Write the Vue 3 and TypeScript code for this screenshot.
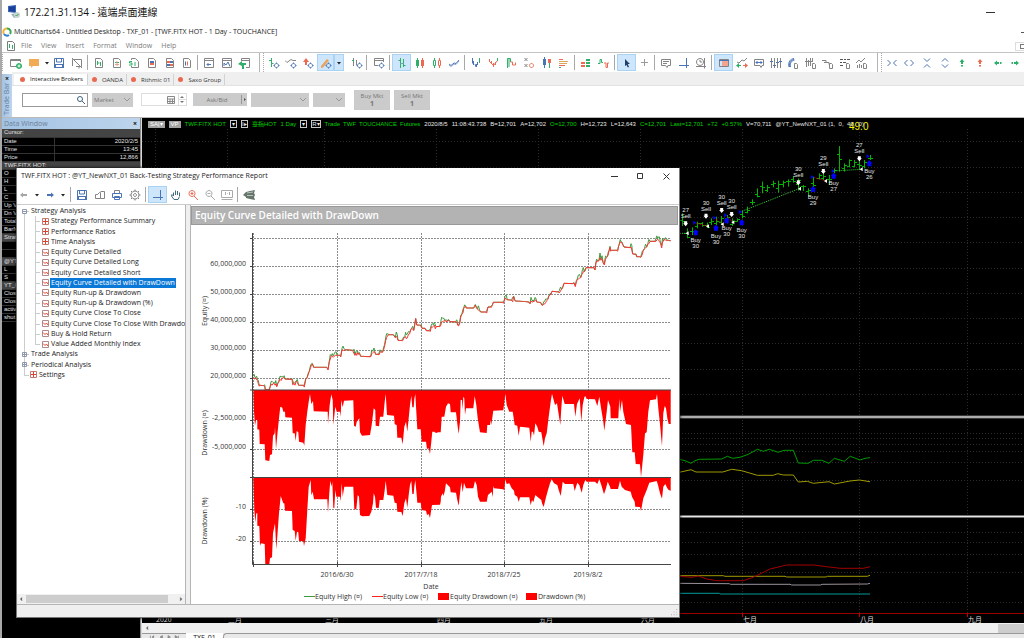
<script setup lang="ts">
import { ref } from 'vue'

type Shape = [color: string, kind: 's' | 'f', d: string]
type Pt = [number, number]

const G = '#848484'
const B = '#4a74b4'
const N = '#2fb06a'
const R = '#ec6a52'
const K = '#555555'

const sheet = 'M2.5 1.5h5l2 2v7h-7z'
const corner = 'M7.5 6.5h2l1 1v4h-3z'
const gear = 'M8.500 6.500a2 2 0 1 0 .01 0z'
const gearTeeth = 'M8.500 5.500v1M8.500 10.500v1M5.500 8.500h1M10.500 8.500h1'
const icons: Record<string, Shape[]> = {
  newWin: [[G, 's', 'M10.500 5V2.500h-10v7H6'], [G, 's', 'M.5 3.500h10'], [N, 'f', 'M9 6a3 3 0 1 0 .01 0z'], ['#fff', 's', 'M9 7.500v3M7.500 9h3']],
  folder: [['#f2ab55', 'f', 'M1 2h10v7H5l-2 2V9H1z']],
  save: [[B, 's', 'M1.500 1.500h9v9h-9zM3.500 1.500v3.500h5v-3.500'], [B, 'f', 'M1 7h10v4H1z'], ['#fff', 'f', 'M3 8h6v2H3z']],
  unlink: [[G, 's', 'M1.500 9V2.500h9v7H5M1 1l10 10M8 9v2.500']],
  sheetA: [[G, 's', sheet], [N, 's', 'M4.500 4v4M4.500 6h2M7.500 5v4']],
  sheetB: [[G, 's', sheet], [N, 's', 'M4 5.500h4'], ['#e7a08a', 's', 'M4 7.500h4M6 4v5']],
  sheetC: [[G, 's', 'M3.500 3v-1.500h4l3 3v6h-7V9'], [N, 's', 'M4 4.500H1.500V6H4v2H1M7 5v4']],
  sheetD: [[G, 's', sheet], [B, 'f', 'M4 4h4v2H4z'], [R, 'f', 'M4 6h4v2H4z']],
  sheetE: [[G, 's', sheet], [R, 'f', 'M3 4h3v2H3zM6 7h3v2H6z'], [B, 'f', 'M6 4h3v2H6zM3 7h3v2H3z']],
  sheetF: [[G, 's', sheet], [B, 's', 'M4.500 4.500v4'], [R, 's', 'M6.500 4.500v4']],
  winIn: [[G, 's', 'M1.500 1.500h9v9h-9zM1 3.500h10'], [B, 's', 'M8 7.500H4M5.500 6L4 7.500 5.500 9']],
  winChart: [[G, 's', 'M1.500 1.500h9v9h-9zM1 3.500h10'], [B, 's', 'M3 9V6l2 2 2-3 2 4.500']],
  winOut: [[G, 's', 'M3.500 4V1.500h8v9H8M3 3.500h8'], [N, 'f', 'M0 7l4-3v2h4v2H6v4H4V9z']],
  gearA: [[N, 's', 'M3.500 1v9M3.500 3.500H1M3.500 6.500h2'], [B, 's', gear], [B, 's', gearTeeth]],
  gearB: [[G, 's', 'M0 3.500l2 2 4-3 2 1h3'], [B, 's', gear], [B, 's', gearTeeth]],
  gearC: [[R, 'f', 'M1 5l3-4 3 4H5v3H3V5z'], [B, 's', gear], [B, 's', gearTeeth]],
  pencil: [['#e9a35a', 'f', 'M1 9l6-7 2 1.500-6 7-2 .5z'], [B, 's', gear], [B, 's', gearTeeth]],
  gearD: [[G, 's', 'M2.500 1v8M5.500 3v5'], [N, 's', 'M1 3.500h2'], [B, 's', gear], [B, 's', gearTeeth]],
  gearE: [[G, 's', 'M10.500 5V1.500h-9v7H5M1 3.500h10'], [B, 's', gear], [B, 's', gearTeeth]],
  ohlc: [[N, 's', 'M4.500 1v10M2.500 3.500h2M7.500 2v8M7.500 8.500h2'], ['#7aa7b8', 's', 'M4.500 6.500h3']],
  candles: [[N, 'f', 'M2 3h3v6H2z'], [N, 's', 'M3.500 1v10'], [R, 'f', 'M7 3h3v6H7z'], [R, 's', 'M8.500 1v10']],
  hollow: [[N, 's', 'M2.500 3.500h2v5h-2zM3.500 1v2M3.500 9v2'], [R, 's', 'M7.500 3.500h2v5h-2zM8.500 1v2M8.500 9v2']],
  line: [[B, 's', 'M1 7l2 1.500L6 6l2 .5L11 3'], ['#8aa7d4', 's', 'M1 8l2 1.500L6 7l2 .5L11 4']],
  vA: [[B, 's', 'M2.500 1v5.500M3.500 4v4M5 7l1 3'], [B, 's', 'M6.500 10V7M7.500 8V5'], [N, 's', 'M9.500 1v5']],
  vB: [[R, 's', 'M1.500 2v3M3.500 4v3M5.500 6v4M7.500 5v3'], [R, 's', 'M1.500 4.500l4 4 4-5'], [N, 's', 'M9.500 1v3']],
  step: [[N, 's', 'M2.500 11V1.500h3V5M4 2v8'], [R, 's', 'M5.500 5h2v3h3V5.500']],
  xo: [[G, 's', 'M1.500 1l3 3M4.500 1l-3 3M1.500 7l3 3M4.500 7l-3 3'], [R, 's', 'M8.500 6.500a2 2 0 1 0 .01 0z']],
  cand2: [[B, 'f', 'M2 2h3v6H2z'], [B, 's', 'M3.500 0v11'], [R, 'f', 'M7 2h3v4H7z'], [N, 's', 'M8.500 6v5']],
  rows: [[R, 's', 'M1 2.500h4M1 8.500h6'], ['#d9a55a', 's', 'M1 4.500h9M1 6.500h8'], [N, 's', 'M1 10.500h2']],
  blocks: [[R, 'f', 'M1 5h4v2H1zM1 8h4v2H1z'], [N, 'f', 'M6 2h4v2H6zM6 5h4v2H6zM6 8h4v2H6z']],
  pulse: [[N, 's', 'M0 6.500h2V2.500h1.500v3H5'], [R, 's', 'M6 6h2v4.500h1.500V6H11']],
  cursor: [['#1f4068', 'f', 'M4 2l5 5H6.800l1.200 3-1.200.5L5.600 8 4 9z']],
  plus: [['#9a9a9a', 's', 'M5.500 2v7M2 5.500h7']],
  note: [[G, 's', 'M1.500 2.500h9v6H8l-1 2-1.500-2h-4zM3 4.500h6M3 6.500h4']],
  ell: [[B, 's', 'M8.500 1v10M1 8.500h10']],
  clock: [[G, 's', 'M5 1.500a3.500 3.500 0 1 0 .01 0zM5 3v2h2M9.500 1v10.500M1 9.500h10']],
  panel: [[G, 's', 'M1.500 2.500h9v7h-9z'], [B, 's', 'M1 3.500h10'], ['#f3a48f', 'f', 'M4 4h6v5H4z']],
  trend: [[G, 's', 'M1 5l2 1 3-3 2 1 3-3'], [N, 'f', 'M0 8.500l3-2.500v5z'], [N, 'f', 'M2 8h3v1H2z'], [R, 'f', 'M12 8.500L9 6v5z'], [R, 'f', 'M7 8h3v1H7z']],
  chat: [[G, 's', 'M1.500 2.500h9v6H9l-1 2-1-2H1.500z'], [B, 's', 'M4.500 4L3 5.500 4.500 7M7.500 4L9 5.500 7.500 7M3 5.500h6']],
  bars: [[G, 's', 'M1.500 1v10M4.500 1v10M7.500 1v10M10.500 1v10'], [B, 's', 'M0 4.500h3M3 8.500h3M6 5.500h3M9 4.500h3']],
  arcDoc: [[B, 's', 'M2 10C1 5 3 2 7 1.500M3.500 10C3 6 4 4 7.500 3M2.500 10C2 5.500 4 3 7 2.500'], [G, 's', corner]],
  barsDoc: [[G, 's', 'M1.500 1v9M3.500 3v6M5.500 1v8M7.500 1v4M0 4.500h7'], [G, 's', corner]],
  flowDoc: [[G, 's', 'M0 3.500h4v2h3M2 5.500h5v2'], [G, 's', corner]],
  gridDoc: [[K, 's', 'M1 2.500h3M5 2.500h2M8 2.500h3M1 5.500h2M4 5.500h3M1 8.500h3'], [G, 's', corner]],
  chartDoc: [[G, 's', 'M0 6l3-3 2 2 4-4M1.500 8v3M3.500 7v4M5.500 8v3'], [G, 's', corner]],
  inH: [[B, 's', 'M1.500 3L4.500 6 1.500 9M10.500 3L7.500 6l3 3']],
  outH: [[B, 's', 'M4.500 3L1.500 6l3 3M7.500 3l3 3-3 3']],
  inV: [[B, 's', 'M3 1.500L6 4.500l3-3M3 10.500l3-3 3 3']],
  outV: [[B, 's', 'M3 4.500l3-3 3 3M3 7.500l3 3 3-3']],
  upG: [[N, 'f', 'M6 2l2.500 3H7v2H5V5H3.500zM5 8h2v1.500H5z']],
  upR: [[R, 'f', 'M6 2l2.500 3H7v2H5V5H3.500zM5 8h2v1.500H5z']],
  leftG: [[N, 'f', 'M2 6l3-2.500V5h2v2H5v1.500zM8 5h1.500v2H8z']],
  rightG: [[N, 'f', 'M10 6L7 3.500V5H5v2h2v1.500zM2.500 5H4v2H2.500z']],
  caret: [['#222', 'f', 'M4 5h4L6 7.500z']],
  back: [['#a5a5a5', 'f', 'M2 6l3-2.500V5h4v2H5v1.500z']],
  forward: [[B, 'f', 'M10 6L7 3.500V5H3v2h4v1.500z']],
  copy: [[G, 's', 'M1.500 9.500v-4h2l2-2h1v6zM6.500 2.500h4v7h-4']],
  print: [[G, 's', 'M3.500 4V1.500h5V4'], [B, 's', 'M1.500 4.500h9v4h-9zM3.500 7.500h5v3h-5z']],
  gear: [[G, 's', 'M6 2a4 4 0 1 0 .01 0zM6 4.500a1.500 1.500 0 1 0 .01 0zM6 .5v1.500M6 10v1.500M.5 6h1.500M10 6h1.500M2 2l1 1M9 9l1 1M10 2L9 3M3 9l-1 1']],
  hand: [['#406a80', 's', 'M3.500 7V3.500M5.500 6V1.500M7.500 6V2M9.500 7V3.500M3.500 7L2 5.500 1.500 7l2.500 3.500h4l1.500-3']],
  zoomIn: [[R, 's', 'M5 1.500a3 3 0 1 0 .01 0zM7 7l4 4M5 3v3M3.500 4.500h3']],
  zoomOut: [['#aaaaaa', 's', 'M5 1.500a3 3 0 1 0 .01 0zM7 7l4 4M3.500 4.500h3']],
  oneOne: [['#aaaaaa', 's', 'M.5 1.500h11v7H.5zM4.500 3v3M6 4.500h.5M8.500 3v3M.5 10.500h11']],
  globe: [['#66756c', 'f', 'M0 6l3-3 4-1 5-1-1 3 1 2-1 2 1 3-5-1-4-1 0-1z'], ['#b9c4bd', 's', 'M4 4l6-1M4 6.500h6']],
}

interface Group { w: number; items?: string[]; kind?: 'sep' | 'grip' | 'pad'; on?: string }
const sep: Group = { w: 4, kind: 'sep' }
const pad: Group = { w: 4, kind: 'pad' }
const grip: Group = { w: 12, kind: 'grip' }
const toolbar: Group[] = [
  { w: 36, items: ['newWin', 'folder'] }, { w: 7, items: ['caret'] }, { w: 36, items: ['save', 'unlink'] }, sep,
  { w: 106, items: ['sheetA', 'sheetB', 'sheetC', 'sheetD', 'sheetE', 'sheetF'] }, sep,
  { w: 53, items: ['winIn', 'winChart', 'winOut'] }, grip,
  { w: 52, items: ['gearA', 'gearB', 'gearC'] }, { w: 17, items: ['pencil'], on: 'pencil' }, { w: 10, items: ['caret'], on: 'caret' }, pad,
  { w: 17, items: ['gearD'] }, sep, { w: 19, items: ['gearE'] }, sep,
  { w: 71, items: ['ohlc', 'candles', 'hollow', 'line'], on: 'ohlc' }, sep,
  { w: 106, items: ['vA', 'vB', 'step', 'xo', 'cand2', 'rows'] }, sep,
  { w: 36, items: ['blocks', 'pulse'] }, sep, { w: 36, items: ['cursor', 'plus'], on: 'cursor' }, sep,
  { w: 53, items: ['note', 'ell', 'clock'] }, sep,
  { w: 157, items: ['panel', 'trend', 'chat', 'bars', 'arcDoc', 'barsDoc', 'flowDoc', 'gridDoc', 'chartDoc'], on: 'panel' }, grip,
  { w: 141, items: ['inH', 'outH', 'inV', 'outV', 'upG', 'upR', 'leftG', 'rightG'] },
]
const reportTools: Group[] = [
  { w: 51, items: ['back', 'caret', 'forward', 'caret'] }, sep,
  { w: 71, items: ['save', 'copy', 'print', 'gear'] }, sep,
  { w: 88, items: ['ell', 'hand', 'zoomIn', 'zoomOut', 'oneOne'], on: 'ell' }, sep,
  { w: 18, items: ['globe'] },
]

const menus = ['File', 'View', 'Insert', 'Format', 'Window', 'Help']
const brokers = ['Interactive Brokers', 'OANDA', 'Rithmic 01', 'Saxo Group']
const broker = ref(brokers[0])

const dataRows: { name: string; value?: string; head?: boolean }[] = [
  { name: 'Cursor:', head: true }, { name: 'Date', value: '2020/2/5' }, { name: 'Time', value: '13:45' },
  { name: 'Price', value: '12,866' }, { name: 'TWF.FITX HOT:', head: true }, { name: 'O' }, { name: 'H' }, { name: 'L' }, { name: 'C' },
  { name: 'Up Vol' }, { name: 'Dn Vol' }, { name: 'Total Vol' }, { name: 'BarN' }, { name: 'Strategy', head: true }, { name: '' }, { name: '' },
  { name: '@YT_NewNXT', head: true }, { name: 'L' }, { name: 'S' }, { name: 'YT_01', head: true }, { name: 'Close' }, { name: 'Close' },
  { name: 'active' }, { name: 'shut' },
]

interface Node { label: string; level: number; icon: 'minus' | 'plus' | 'table' | 'curve'; end?: boolean }
const tree: Node[] = [
  { label: 'Strategy Analysis', level: 0, icon: 'minus' },
  ...['Strategy Performance Summary', 'Performance Ratios', 'Time Analysis'].map((label): Node => ({ label, level: 1, icon: 'table' })),
  ...['Equity Curve Detailed', 'Equity Curve Detailed Long', 'Equity Curve Detailed Short', 'Equity Curve Detailed with DrawDown',
    'Equity Run-up & Drawdown', 'Equity Run-up & Drawdown (%)', 'Equity Curve Close To Close', 'Equity Curve Close To Close With Drawdown',
    'Buy & Hold Return'].map((label): Node => ({ label, level: 1, icon: 'curve' })),
  { label: 'Value Added Monthly Index', level: 1, icon: 'curve', end: true },
  { label: 'Trade Analysis', level: 0, icon: 'plus' },
  { label: 'Periodical Analysis', level: 0, icon: 'plus' },
  { label: 'Settings', level: 0, icon: 'table', end: true },
]
const selected = ref('Equity Curve Detailed with DrawDown')

/* Series are stored in thirds of a pixel, relative to an origin. */
function parse(text: string, dx = 0): Pt[] {
  return text.trim().split(/\s+/).map((p) => {
    const [x, y] = p.split(',').map(Number)
    return [x + dx, y]
  })
}
function place(pts: Pt[], ox: number, oy: number): string {
  return pts.map(([x, y]) => `${(ox + x / 3).toFixed(1)},${(oy + y / 3).toFixed(1)}`).join(' ')
}
const noise = (i: number) => { const v = Math.sin(i * 12.9898) * 43758.5453; return v - Math.floor(v) }

const equity: Pt[] = [
  ...parse(`190,455 195,458 200,462 205,472 210,481 224,482 226,494 238,494 243,480 250,470 255,474 260,482 263,470 270,462 280,456 285,462
    306,463 308,475 315,474 322,468 326,481 343,481 347,464 352,452 358,440 362,425 367,418 371,427 413,427 414,435 418,408 427,388 432,396
    436,388 441,391 452,391 456,376 462,376 466,374 490,376 492,384 500,388 508,378 512,394 540,395 545,382 552,374 557,388 567,388 573,380
    578,383 584,362 590,332 594,325 598,329 613,329 616,336 622,337 624,346 638,347 644,336 652,334 659,320 665,310 671,310 677,280 680,300
    694,301 696,310 708,310 711,317 721,317 724,306 733,301 736,305`),
  ...parse(`18,305 30,304 35,292 48,285 60,290 78,291 86,300 92,276 99,260 104,244 109,249 130,249 136,239 142,250 152,261 170,261 174,246
    184,246 190,232 220,232 225,220 232,224 248,226 251,216 256,228 290,230 300,232 315,224 320,231 335,233 341,238 350,225 360,210 366,199
    388,201 395,188 402,175 432,176 436,180 445,160 452,152 460,143 468,128 495,128 500,110 510,98 516,103 523,114 530,97 535,86 540,68 545,76
    563,76 568,52 576,54 582,66 603,68 608,87 618,88 620,95 632,95 640,76 650,60 660,49 678,49 683,38 688,50 695,62 700,44 706,40 712,46 722,47`, 720),
]
const low: Pt[] = []
const high: Pt[] = []
equity.forEach((p, i) => {
  const q = equity[i + 1] ?? p
  const steps = Math.max(1, Math.round((q[0] - p[0]) / 3))
  const flat = q[0] - p[0] > 9 && Math.abs(q[1] - p[1]) < 3
  for (let k = 0; k < steps; k++) {
    const x = p[0] + ((q[0] - p[0]) * k) / steps
    const y = p[1] + ((q[1] - p[1]) * k) / steps + (flat ? 0 : noise(x) * 10 - 3)
    low.push([x, Math.min(494, y)])
    high.push([x, Math.min(494, y - (flat ? 0 : noise(x + 7) ** 2 * 14))])
  }
})
const lowLine = place(low, 190, 225)
const highLine = place(high, 190, 225)

const ddMoney = place([
  ...parse(`190,495 192,560 195,602 198,585 202,585 202,613 208,614 209,657 224,658 226,706 238,708 240,690 246,688 249,632 254,625 255,605 258,672
    261,640 267,580 271,545 277,548 280,560 285,560 286,577 306,578 308,625 314,625 317,648 320,618 325,622 327,650 340,653 343,662 347,600 352,560
    356,530 360,507 364,537 369,528 371,559 413,560 414,598 419,540 424,508 428,525 430,600 436,545 440,560 450,560 452,575 454,525 458,547 462,527
    490,526 492,602 497,605 500,590 508,580 510,622 516,632 540,630 545,600 551,550 556,555 557,602 567,604 570,575 580,575 584,530 587,507 591,570
    612,572 614,598 620,600 622,638 634,638 638,658 643,605 648,590 652,620 656,580 660,540 664,512 667,547 671,547 673,522 676,507 680,580 682,613
    692,613 695,650 708,650 711,672 716,670 720,687 724,650 727,620 733,620 738,624 745,622`),
  ...parse(`28,622 32,622 35,575 43,575 48,545 54,535 60,537 62,562 78,562 82,596 86,627 90,590 92,525 96,525 98,555 100,515 103,520 105,570 108,550
    130,550 134,513 139,540 143,580 150,622 170,624 172,600 180,600 182,585 184,600 190,557 220,556 222,540 226,506 230,540 238,560 248,560 254,600
    262,602 266,632 270,605 298,608 302,650 305,620 309,620 312,632 316,595 322,605 326,620 334,622 337,640 341,664 345,640 350,625 356,575 362,530
    366,506 375,540 381,535 384,555 391,600 394,550 397,512 404,537 432,537 436,575 441,537 449,520 454,590 458,540 463,517 466,513 470,522 495,523
    502,543 508,515 513,548 520,590 523,617 530,560 534,525 541,545 542,580 565,580 568,520 570,560 576,525 580,560 588,597 603,600 607,682 614,682
    617,717 630,718 633,757 640,690 645,625 650,622 655,560 660,526 678,523 681,507 685,550 690,598 696,664 700,565 704,543 708,550 712,580 716,597
    722,597 722,495`, 720),
], 190, 225)
const ddPercent = place([
  ...parse(`190,52 193,150 196,187 199,160 202,160 202,197 208,198 210,257 213,250 224,252 226,313 238,313 240,295 246,292 249,220 255,190 259,268
    262,230 267,160 272,108 280,130 283,130 285,152 306,153 308,210 314,213 317,242 321,215 325,217 327,243 340,244 342,258 347,235 352,150 356,80
    362,60 364,106 368,95 372,118 412,118 414,158 418,100 421,62 425,80 427,65 430,143 433,145 436,90 439,110 450,110 452,124 455,70 458,110 463,80
    490,80 493,148 499,148 503,105 507,110 510,165 517,169 538,168 544,155 549,130 551,100 555,110 558,143 566,144 569,120 580,120 584,90 587,62
    592,105 610,107 614,128 620,130 622,155 634,156 638,168 643,130 648,115 652,143 656,105 660,75 664,62 667,102 671,102 673,80 676,60 680,105
    682,128 692,128 695,150 708,152 711,165 716,162 720,174 726,135 750,134 752,125`),
  ...parse(`3,110 8,100 10,108 14,95 18,70 30,82 32,97 48,98 52,120 56,137 60,100 64,66 68,97 72,68 78,85 100,85 105,63 110,75 114,110 120,125
    140,125 144,105 155,95 158,112 160,78 162,85 190,88 193,92 196,58 200,72 208,70 215,85 222,92 224,105 232,110 236,126 240,112 268,112 272,136
    276,120 280,127 286,105 292,110 304,120 306,130 311,141 318,112 324,90 330,70 335,58 342,70 352,75 356,90 362,108 368,65 375,72 400,72 404,93
    412,68 418,75 425,98 430,75 436,60 440,65 465,65 472,72 478,58 484,75 492,103 498,85 503,65 510,80 512,87 534,87 540,62 545,80 555,90 572,95
    576,110 584,125 586,140 600,141 603,153 610,115 620,90 628,68 650,63 654,75 660,100 666,116 670,80 676,72 682,85 686,90 692,92 692,52`, 750),
], 190, 460)

const yTicks = [
  { y: 239, label: '' }, { y: 267, label: '60,000,000' }, { y: 295, label: '50,000,000' }, { y: 323, label: '40,000,000' },
  { y: 351, label: '30,000,000' }, { y: 379, label: '20,000,000' }, { y: 421, label: '-2,500,000' }, { y: 450, label: '-5,000,000' },
  { y: 510, label: '-10' }, { y: 542, label: '-20' },
]
const xTicks = [
  { x: 253, label: '' }, { x: 337, label: '2016/6/30' }, { x: 421, label: '2017/7/18' }, { x: 504, label: '2018/7/25' }, { x: 588, label: '2019/8/2' },
]
const legend = [
  { x: 304, t: 315, box: false, c: '#3f9a3f', label: 'Equity High (¤)' }, { x: 372, t: 383, box: false, c: '#ff2222', label: 'Equity Low (¤)' },
  { x: 438, t: 450, box: true, c: '#ff0000', label: 'Equity Drawdown (¤)' }, { x: 526, t: 538, box: true, c: '#ff0000', label: 'Drawdown (%)' },
]

/* Price chart */
const months = [
  { x: 155, label: '2020' }, { x: 227, label: '二月' }, { x: 324, label: '三月' }, { x: 436, label: '四月' }, { x: 538, label: '五月' },
  { x: 640, label: '六月' }, { x: 742, label: '七月' }, { x: 859, label: '八月' }, { x: 967, label: '九月' },
]
const rules = [141, 167, 192, 217, 242, 268, 293, 318, 343, 369, 394, 433, 438, 444, 451, 462, 480, 532, 542, 554, 572, 602]
const at = (x: number, y: number): Pt => [500 + x / 3, 110 + y / 3]
const bars = ([[545, 310, 348], [561, 355, 385], [575, 352, 375], [590, 335, 355], [605, 336, 350], [620, 338, 354], [633, 325, 345],
  [648, 320, 345], [664, 318, 345], [680, 315, 340], [697, 325, 348], [711, 325, 335], [727, 303, 325], [742, 290, 310], [757, 268, 285],
  [772, 235, 262], [787, 215, 250], [802, 225, 246], [818, 212, 232], [833, 212, 248], [850, 212, 232], [865, 208, 230], [880, 198, 218],
  [895, 205, 242], [910, 225, 243], [925, 235, 260], [940, 200, 245], [956, 190, 208], [970, 190, 210], [988, 195, 225], [1003, 175, 190],
  [1018, 108, 185], [1033, 160, 185], [1048, 148, 172], [1063, 150, 172], [1078, 145, 180], [1093, 150, 175], [1110, 135, 150]] as number[][])
  .map(([x, a, b], i) => {
    const [px, top] = at(x, a)
    const bottom = at(x, b)[1]
    const h = bottom - top
    const o = Math.round(top + h * (0.2 + 0.6 * noise(i + 3))) + 0.5
    const c = Math.round(top + h * (0.1 + 0.8 * noise(i + 40))) + 0.5
    const r = Math.round(px) + 0.5
    return `M${r} ${top}V${bottom}M${r - 2.5} ${o}H${r}M${r} ${c}H${r + 2.5}`
  }).join('')
interface Mark { x: number; y: number; side: 'Sell' | 'Buy'; n: string; ty: number }
const marks: Mark[] = ([[557, 340, 'Sell', '27', 300], [618, 317, 'Sell', '30', 278], [665, 300, 'Sell', '30', 261], [695, 312, 'Sell', '30', 273],
  [895, 217, 'Sell', '30', 178], [970, 183, 'Sell', '29', 143], [1078, 145, 'Sell', '27', 106], [587, 367, 'Buy', '30', 391], [648, 353, 'Buy', '30', 378],
  [680, 331, 'Buy', '30', 355], [725, 337, 'Buy', '30', 360], [939, 237, 'Buy', '29', 261], [1001, 197, 'Buy', '27', 218],
  [1108, 160, 'Buy', '26', 183]] as [number, number, 'Sell' | 'Buy', string, number][])
  .map(([x, y, side, n, ty]) => ({ x: at(x, y)[0], y: at(x, y)[1], side, n, ty: at(0, ty)[1] }))
const entries = ([[583, 338], [643, 323], [676, 316], [720, 306], [936, 201], [998, 183], [1103, 139]] as Pt[]).map(([x, y]) => at(x, y))
const exits = ([[563, 370], [624, 349], [668, 343], [700, 337], [900, 236], [978, 213], [1085, 178]] as Pt[]).map(([x, y]) => at(x, y))
const links = ([[540, 370, 563, 370, 0], [720, 306, 897, 236, 0], [998, 183, 1085, 178, 0], [583, 338, 624, 349, 1], [643, 323, 668, 343, 1],
  [676, 316, 700, 337, 1], [936, 201, 978, 213, 1]] as number[][]).map(([a, b, c, d, loss]) => ({ p: at(a, b), q: at(c, d), c: loss ? '#dd0000' : '#3ad23a' }))

const indicators = [
  { c: '#009a00', p: '28,178 45,182 63,190 75,182 88,178 155,177 172,169 188,175 210,172 235,163 262,148 280,154 298,148 325,157 342,151 370,151 385,189 415,190 430,181 455,181 477,190 493,175 523,184 541,169 570,180 585,175 600,173' },
  { c: '#a09a00', p: '28,217 63,209 78,216 158,216 185,208 215,212 262,226 310,226 323,221 340,225 370,225 385,246 412,244 430,250 477,245 493,252 540,243 568,240 600,245' },
  { c: '#a09a00', p: '28,527 160,527 165,529 345,529 350,531 468,531 472,529 592,529 600,526' },
  { c: '#a00000', p: '28,529 65,532 85,528 110,537 140,542 220,542 250,532 300,507 350,495 430,495 470,500 510,505 580,505 600,500' },
  { c: '#9a949a', p: '28,550 178,551 182,553 360,553 365,555 452,555 456,553 592,552 600,550' },
  { c: '#009a9a', p: '28,580 148,580 150,582 600,582' },
].map((s) => ({ c: s.c, p: place(parse(s.p), 670, 400) }))

const market = ['Trade', 'TWF', 'TOUCHANCE', 'Futures']
const quotes: { t: string; c?: string }[] = [
  { t: '2020/8/5', c: 'w' }, { t: '11:08:43.738', c: 'w' },
  { t: 'B=12,701', c: 'w' }, { t: 'A=12,702', c: 'w' }, { t: 'O=12,700' }, { t: 'H=12,723', c: 'w' }, { t: 'L=12,643', c: 'w' },
  { t: 'C=12,701' }, { t: 'Last=12,701' }, { t: '+72' }, { t: '+0.57%' }, { t: 'V=70,711', c: 'w' }, { t: '@YT_NewNXT_01 (1,  0,  40,  0)', c: 'w' },
]
</script>

<template>
  <div class="screen">
    <header class="remote">
      <svg class="remote-logo" viewBox="0 0 14 14"><path d="M1 1l8-1v8l-8-1z" fill="#3567b8" /><path d="M2 2l6-1v6L2 6z" fill="#1d3f9a" /><path d="M4 9l6-1 3 3-6 2z" fill="#9fb2c4" /><circle cx="10" cy="10" r="3" fill="#c9d6cf" /><path d="M8.500 10l1 1 2-2" stroke="#3c9b55" fill="none" /></svg>
      <span class="grow">172.21.31.134 - 遠端桌面連線</span>
      <button class="win" aria-label="Minimize remote session"><svg viewBox="0 0 9 9"><path d="M0 4.500h9" /></svg></button>
    </header>

    <div class="app-title">
      <svg class="logo" viewBox="0 0 10 10"><path d="M5 1.500A3.500 3.500 0 0 0 2 7" stroke="#f2b632" /><path d="M2 7a3.500 3.500 0 0 0 5 1" stroke="#2f7fd0" /><path d="M5 1.500A3.500 3.500 0 0 1 8 7" stroke="#35a853" /></svg>
      <span class="grow">MultiCharts64 - Untitled Desktop - TXF_01 - [TWF.FITX HOT - 1 Day - TOUCHANCE]</span>
      <i class="dash"></i>
    </div>

    <nav class="menu">
      <svg class="ico" viewBox="0 0 12 12"><path d="M2.500 1.500h5l2 2v7h-7z" stroke="#7b7b7b" fill="none" /><path d="M4.500 4v4M7.500 5v4" stroke="#2fb06a" /></svg>
      <button v-for="m in menus" :key="m">{{ m }}</button>
      <span class="grow"></span>
      <button class="restore" aria-label="Restore child window"><i></i></button>
    </nav>

    <div class="tools" role="toolbar" aria-label="Main toolbar">
      <i class="dots"></i>
      <div v-for="(g, i) in toolbar" :key="i" class="group" :class="g.kind" :style="{ width: g.w + 'px' }">
        <button v-for="(name, j) in g.items" :key="j" :class="{ on: g.on === name }" :aria-label="name">
          <svg class="ico" viewBox="0 0 12 12">
            <path v-for="(s, k) in icons[name]" :key="k" :d="s[2]" :fill="s[1] === 'f' ? s[0] : 'none'" :stroke="s[1] === 's' ? s[0] : 'none'" />
          </svg>
        </button>
      </div>
    </div>

    <section class="trade">
      <div class="strip"><b>×</b><span>Trade Bar</span></div>
      <div class="trade-main">
        <div class="tabs" role="tablist">
          <button v-for="b in brokers" :key="b" role="tab" :class="{ active: b === broker }" @click="broker = b"><i></i>{{ b }}</button>
        </div>
        <div class="controls">
          <label class="search"><input type="text" aria-label="Symbol" /><svg viewBox="0 0 8 8"><circle cx="3" cy="3" r="2.500" /><path d="M5 5l3 3" /></svg></label>
          <span class="drop market"><select aria-label="Order type"><option>Market</option></select><svg viewBox="0 0 6 4"><path d="M0 0l3 3 3-3" /></svg></span>
          <label class="qty"><input type="text" aria-label="Quantity" /><svg viewBox="0 0 8 8"><path d="M.5 .5h7v7h-7zM0 3h8M3 3v5M5.500 3v5M0 5.500h8" /></svg><svg class="spin" viewBox="0 0 8 11"><path d="M4 2l2 2H2zM4 9L2 7h4z" /><path d="M.5 0v11M0 5.500h8" class="rule" /></svg></label>
          <button class="ask"><span>Ask/Bid</span><i><svg viewBox="0 0 5 5"><path d="M2 1l2 1.500L2 4z" /></svg></i></button>
          <span class="drop account"><select aria-label="Account"><option></option></select><svg viewBox="0 0 6 4"><path d="M0 0l3 3 3-3" /></svg></span>
          <span class="drop tif"><select aria-label="Time in force"><option></option></select><svg viewBox="0 0 6 4"><path d="M0 0l3 3 3-3" /></svg></span>
          <button class="order">Buy Mkt<b>1</b></button>
          <button class="order">Sell Mkt<b>1</b></button>
        </div>
      </div>
    </section>

    <main class="workspace">
      <aside class="data">
        <div class="data-head"><span>Data Window</span><b>×</b></div>
        <table>
          <colgroup><col class="name" /><col /></colgroup>
          <tbody>
            <tr v-for="(r, i) in dataRows" :key="i" :class="{ head: r.head }">
              <td v-if="r.head" colspan="2">{{ r.name }}</td>
              <template v-else><td>{{ r.name }}</td><td class="val">{{ r.value }}</td></template>
            </tr>
          </tbody>
        </table>
      </aside>

      <section class="price">
        <div class="quote">
          <button class="tag">SA|▾</button><button class="tag">VP</button><span>TWF.FITX HOT</span>
          <button class="mini">▾</button><button class="mini">I▸</button><span>臺指HOT</span><span>1 Day</span>
          <button class="mini">▾</button><button class="mini">R▾</button>
          <span class="names"><span v-for="m in market" :key="m">{{ m }}</span></span>
          <span v-for="q in quotes" :key="q.t" :class="q.c">{{ q.t }}</span>
        </div>
        <svg class="plot" viewBox="142 118 882 505" preserveAspectRatio="xMinYMin slice">
          <g class="rules">
            <path v-for="m in months" :key="m.x" :d="`M${m.x}.5 129V614`" />
            <path v-for="y in rules" :key="y" :d="`M142 ${y}.5H1400`" />
          </g>
          <text x="849" y="130" class="position">49.0</text>
          <path class="bars" :d="bars" />
          <path v-for="(l, i) in links" :key="'l' + i" :d="`M${l.p}L${l.q}`" :stroke="l.c" stroke-dasharray="1 1" />
          <path v-for="(e, i) in entries" :key="'e' + i" :d="`M${e[0] - 1} ${e[1] - 2}l3 2-3 2z`" fill="#00f" />
          <path v-for="(e, i) in exits" :key="'x' + i" :d="`M${e[0] + 1} ${e[1] - 2}l-3 2 3 2z`" fill="#fff" />
          <g v-for="(m, i) in marks" :key="'m' + i" class="mark">
            <path v-if="m.side === 'Sell'" fill="#fff" :d="`M${m.x - 1.5} ${m.y - 2}h3v2h1l-2.500 3-2.500-3h1z`" />
            <path v-else fill="#00f" :d="`M${m.x - 2} ${m.y + 3}h4v-3h1l-3-3-3 3h1z`" />
            <text :x="m.x" :y="m.ty + 2">{{ m.side === 'Sell' ? m.n : 'Buy' }}</text>
            <text :x="m.x" :y="m.ty + 8">{{ m.side === 'Sell' ? 'Sell' : m.n }}</text>
          </g>
          <path d="M142 417H1400M142 516.500H1400" stroke="#707070" stroke-width="3" />
          <path d="M142 417H1400M142 516.500H1400" stroke="#e8e8e8" />
          <polyline v-for="(s, i) in indicators" :key="'s' + i" :points="s.p" :stroke="s.c" />
          <path d="M142 613.500H1400" stroke="#9a0000" />
          <g v-for="m in months" :key="'t' + m.x" class="month"><path :d="`M${m.x}.5 614v3`" /><text :x="m.x + 1" y="622">{{ m.label }}</text></g>
        </svg>
        <div class="scroll"><b>‹</b><i></i></div>
        <div class="sheets">
          <svg class="navs" viewBox="0 0 44 5"><path d="M5 2v3M9 2v3L7 4zM20 2v3l-3-1zM27 2v3l3-1zM36 2v3l3-1zM40 2v3" /></svg>
          <button>TXF_01</button><span class="rest"></span>
        </div>
      </section>

      <section class="report" role="dialog" aria-labelledby="report-title">
        <header class="report-head">
          <span id="report-title" class="grow">TWF.FITX HOT : @YT_NewNXT_01 Back-Testing Strategy Performance Report</span>
          <button class="win" aria-label="Minimize"><svg viewBox="0 0 7 7"><path d="M0 3.500h7" /></svg></button>
          <button class="win" aria-label="Maximize"><svg viewBox="0 0 7 7"><path d="M.5 .5h5v5h-5z" /></svg></button>
          <button class="win" aria-label="Close"><svg viewBox="0 0 7 7"><path d="M.5 .5l6 6M6.500 .5l-6 6" /></svg></button>
        </header>
        <div class="tools report-tools" role="toolbar" aria-label="Report toolbar">
          <div v-for="(g, i) in reportTools" :key="i" class="group" :class="g.kind" :style="{ width: g.w + 'px' }">
            <button v-for="(name, j) in g.items" :key="j" :class="{ on: g.on === name }" :aria-label="name">
              <svg class="ico" viewBox="0 0 12 12">
                <path v-for="(s, k) in icons[name]" :key="k" :d="s[2]" :fill="s[1] === 'f' ? s[0] : 'none'" :stroke="s[1] === 's' ? s[0] : 'none'" />
              </svg>
            </button>
          </div>
        </div>
        <div class="report-body">
          <nav class="side">
            <ul>
              <li v-for="n in tree" :key="n.label" :class="['l' + n.level, n.icon, { end: n.end }]">
                <span class="rail"><svg v-if="n.icon === 'minus' || n.icon === 'plus'" class="box" viewBox="0 0 5 5"><path :d="n.icon === 'plus' ? 'M.5 .5h4v4h-4zM2.500 1v3M1 2.500h3' : 'M.5 .5h4v4h-4zM1 2.500h3'" /></svg></span>
                <span v-if="n.level" class="branch"></span>
                <svg v-if="n.icon === 'table' || n.icon === 'curve'" class="leaf" viewBox="0 0 7 7">
                  <path d="M.5 .5h6v6h-6z" class="frame" />
                  <path :d="n.icon === 'table' ? 'M3.500 1v5M1 3.500h5' : 'M1 2.500l2 2 1.500-1.500L6 5'" class="inner" />
                </svg>
                <button :class="{ picked: n.label === selected }" @click="selected = n.label">{{ n.label }}</button>
              </li>
            </ul>
            <div class="hbar"><b>‹</b><i></i><b>›</b></div>
          </nav>
          <article class="pane">
            <h1>{{ selected }}</h1>
            <svg class="equity" viewBox="191 226 488 379" preserveAspectRatio="xMinYMin slice">
              <g class="dash-grid">
                <path v-for="t in yTicks" :key="t.y" :d="`M254 ${t.y - 0.5}H671`" />
                <path v-for="t in xTicks" :key="t.x" :d="`M${t.x}.5 233V564`" />
              </g>
              <polygon :points="ddMoney" fill="#f00" />
              <polygon :points="ddPercent" fill="#f00" />
              <polyline :points="highLine" stroke="#3f9a3f" />
              <polyline :points="lowLine" stroke="#f33" />
              <g class="axis">
                <path d="M252.500 233V564.500H671M250 390H671M250 477.500H671" />
                <path v-for="t in yTicks" :key="'k' + t.y" :d="`M250 ${t.y - 0.5}h3`" />
                <path v-for="t in xTicks" :key="'k' + t.x" :d="`M${t.x}.5 562v5`" />
              </g>
              <g class="labels">
                <text v-for="t in yTicks" :key="'y' + t.y" x="246" :y="t.y - 1" text-anchor="end">{{ t.label }}</text>
                <text v-for="t in xTicks" :key="'x' + t.x" :x="t.x" y="577" text-anchor="middle">{{ t.label }}</text>
                <text x="431" y="589" text-anchor="middle">Date</text>
                <text transform="translate(207 311) rotate(-90)" text-anchor="middle">Equity (¤)</text>
                <text transform="translate(207 433) rotate(-90)" text-anchor="middle">Drawdown (¤)</text>
                <text transform="translate(207 521) rotate(-90)" text-anchor="middle">Drawdown (%)</text>
              </g>
              <g v-for="l in legend" :key="l.label" class="labels">
                <rect v-if="l.box" :x="l.x" y="593" width="11" height="7" :fill="l.c" />
                <path v-else :d="`M${l.x} 596.500h11`" :stroke="l.c" />
                <text :x="l.t" y="599">{{ l.label }}</text>
              </g>
            </svg>
          </article>
        </div>
        <footer class="report-foot"><svg viewBox="0 0 8 8"><path d="M6 0h1v1H6zM3 3h1v1H3zM6 3h1v1H6zM0 6h1v1H0zM3 6h1v1H3zM6 6h1v1H6z" /></svg></footer>
      </section>
    </main>
  </div>
</template>

<style>
html, body { margin: 0; overflow: hidden; background: #fff; }
</style>

<style scoped>
.screen { box-sizing: border-box; height: 100vh; border-left: 2px solid #a9a9a9; display: flex; flex-direction: column; background: #fff; color: #222; font: 7px/10px "Open Sans", "Noto Sans CJK TC", sans-serif; }
.screen * { box-sizing: border-box; }
button { border: 0; padding: 0; margin: 0; background: none; font: inherit; color: inherit; cursor: default; }
input, select { font: inherit; color: inherit; border: 0; padding: 0; margin: 0; min-width: 0; background: none; border-radius: 0; appearance: none; outline: 0; }
i, b { font-style: normal; }
.grow { flex: 1; }
svg { display: block; }
.ico { width: 12px; height: 12px; flex: none; }

.remote { flex: none; height: 24px; display: flex; align-items: center; padding: 0 29px 0 5px; font-size: 10px; color: #111; }
.remote-logo { width: 14px; height: 14px; margin-right: 3px; }
.win { width: 9px; height: 9px; }
.win svg { width: 100%; fill: none; stroke: #333; }
.app-title { flex: none; height: 16px; display: flex; align-items: center; }
.logo { width: 10px; height: 10px; fill: none; stroke-width: 2; margin-right: 2px; }
.dash { width: 3px; height: 1px; background: #555; }
.menu { flex: none; height: 12px; display: flex; align-items: center; gap: 9px; padding-left: 3px; color: #7c7c7c; }
.menu .ico { margin-right: -5px; }
.restore { width: 9px; height: 9px; border: 1px solid #ddd; border-right: 0; padding: 1px 0 1px 4px; }
.restore i { display: block; height: 5px; border: 1px solid #777; border-right: 0; }

.tools { flex: none; height: 20px; display: flex; align-items: stretch; border-top: 1px solid #c4c4c4; overflow: hidden; }
.dots { width: 5px; border-left: 1px dotted #aaa; margin: 1px 0; }
.group { flex: none; display: flex; }
.group button { flex: 1; min-width: 0; display: flex; align-items: center; justify-content: center; margin: 1px 0; }
.group .on { background: #cde6fb; border: 1px solid #a9d3f5; }
.sep::before { content: ""; width: 1px; margin: 2px 0 2px 1px; background: #a8a8a8; }
.grip { padding-left: 6px; }
.grip::before { content: ""; width: 3px; border-left: 1px solid #b5b5b5; border-right: 1px dotted #aaa; }

.trade { flex: none; height: 46px; display: flex; border-bottom: 1px solid #b9b9b9; }
.strip { width: 10px; margin-top: 2px; background: linear-gradient(90deg, #a3c3e4, #c0d5ec); overflow: hidden; display: flex; flex-direction: column; align-items: center; color: #5f7c9c; }
.strip b { color: #111; line-height: 9px; }
.strip span { writing-mode: vertical-rl; transform: rotate(180deg); white-space: nowrap; line-height: 10px; }
.trade-main { flex: 1; background: #efefef; display: flex; flex-direction: column; }
.tabs { height: 14px; padding: 2px 0 0 2px; display: flex; font-size: 6px; border-bottom: 1px solid #e2e2e2; }
.tabs button { display: flex; align-items: center; gap: 5px; padding: 0 3px 0 4px; border-right: 1px solid #d2d2d2; color: #333; }
.tabs .active { background: #fff; padding: 0 4px 1px 6px; color: #111; }
.tabs i { width: 5px; height: 5px; border-radius: 50%; background: #e8694f; }
.controls { flex: 1; background: #fff; display: flex; align-items: center; gap: 4px; padding: 0 10px 4px; font-size: 6px; color: #777; }
.search { width: 66px; height: 14px; border: 1px solid #999; display: flex; align-items: center; }
.search input { flex: 1; }
.search svg { width: 8px; margin-right: 2px; fill: none; stroke: #3c5f7c; }
.drop { height: 14px; display: flex; position: relative; background: #cbcbcb; }
.drop select { flex: 1; padding-left: 2px; }
.drop svg { position: absolute; right: 3px; top: 5px; width: 6px; fill: none; stroke: #999; }
.market { width: 41px; margin-right: 4px; }
.qty { width: 46px; height: 13px; border: 1px solid #ddd; display: flex; align-items: center; margin-right: 2px; }
.qty input { flex: 1; }
.qty svg { width: 8px; fill: none; stroke: #888; margin-right: 3px; }
.qty .spin { margin: 0; fill: #777; stroke: none; }
.spin .rule { stroke: #ddd; }
.ask { width: 54px; height: 13px; background: #cbcbcb; display: flex; align-items: center; }
.ask span { flex: 1; }
.ask i { border-left: 1px solid #999; width: 6px; height: 9px; display: flex; align-items: center; }
.ask svg { width: 5px; fill: #555; }
.account { width: 58px; }
.tif { width: 32px; margin-right: 5px; }
.order { width: 36px; height: 20px; background: #cbcbcb; font-size: 6px; line-height: 8px; display: flex; flex-direction: column; align-items: center; justify-content: center; }
.order b { font-size: 7px; }

.workspace { flex: 1; min-height: 0; position: relative; display: flex; background: #000; }
.data { width: 139px; flex: none; font: 6px/8px "Liberation Sans", Arial, sans-serif; color: #e0e0e0; border-right: 1px solid #8e8e8e; }
.data-head { height: 11px; display: flex; justify-content: space-between; align-items: center; padding: 0 3px 0 2px; background: linear-gradient(90deg, #a3c3e4, #bdd4ec); color: #6d8094; font: 7px/10px "Open Sans", sans-serif; }
.data-head b { color: #111; }
.data table { width: 100%; border-collapse: collapse; table-layout: fixed; }
.data .name { width: 52px; }
.data td { height: 8px; padding: 0 2px; border-bottom: 1px solid #333; overflow: hidden; white-space: nowrap; line-height: 7px; }
.data .val { text-align: right; border-left: 1px solid #333; }
.data .head td { background: #444; }

.price { flex: 1; min-width: 0; display: flex; flex-direction: column; border-left: 1px solid #d8d8d8; position: relative; }
.quote { position: absolute; left: 6px; top: 2px; height: 8px; display: flex; align-items: center; gap: 4px; white-space: pre; font: 6px/8px "Liberation Sans", "Noto Sans CJK TC", sans-serif; color: #00d000; }
.quote .w { color: #e8e8e8; }
.names { display: flex; gap: 3px; }
.tag { background: #a2a2a2; color: #fff; padding: 0 2px; height: 7px; line-height: 7px; }
.mini { border: 1px solid #c8c8c8; color: #eee; height: 8px; min-width: 7px; line-height: 6px; }
.plot { flex: 1; min-height: 0; width: 100%; fill: none; }
.rules path { stroke: #2b2b2b; stroke-dasharray: 1 2; }
.position { fill: #f5f500; font: 10px "Liberation Sans", sans-serif; }
.bars { stroke: #00b400; }
.mark text { fill: #e4e4e4; font: 6px "Liberation Sans", sans-serif; text-anchor: middle; }
.month path { stroke: #c00; }
.month text { fill: #ddd; font: 7px "Noto Sans CJK TC", sans-serif; }
.scroll { flex: none; height: 10px; display: flex; align-items: center; justify-content: space-between; background: #f0f0f0; color: #333; padding-left: 4px; line-height: 8px; }
.scroll i { width: 26px; height: 9px; background: #cdcdcd; }
.sheets { flex: none; height: 5px; overflow: hidden; display: flex; background: #e9e9e9; }
.navs { width: 44px; height: 5px; border-top: 1px solid #999; stroke: #888; fill: #888; }
.sheets button { width: 37px; height: 9px; line-height: 9px; background: #fff; color: #111; }
.rest { flex: 1; border-top: 1px solid #999; border-left: 1px solid #999; border-top-left-radius: 4px; }

.report { position: absolute; left: 14px; top: 50px; width: 664px; height: 450px; display: flex; flex-direction: column; background: #fff; border: 1px solid #777; border-top: 0; box-shadow: 0 0 3px #000; }
.report-head { flex: none; height: 16px; display: flex; align-items: center; gap: 19px; padding: 0 9px 0 4px; }
.report-head .win { width: 7px; height: 7px; }
.report-tools { height: 21px; border: 0; border-bottom: 1px solid #ccc; padding: 1px 0 0 1px; }
.report-body { flex: 1; min-height: 0; display: flex; gap: 4px; background: #efefef; border-bottom: 1px solid #b5b5b5; }
.side { width: 169px; display: flex; flex-direction: column; background: #fff; border-right: 1px solid #b5b5b5; overflow: hidden; }
.side ul { list-style: none; margin: 1px 0 0; padding: 0 0 0 4px; height: 174px; display: grid; grid-auto-rows: 1fr; }
.side li { display: flex; align-items: center; white-space: nowrap; }
.leaf { width: 7px; height: 7px; flex: none; margin-right: 1px; fill: none; }
.frame { stroke: #b08a8a; }
.inner { stroke: #e0412c; }
.table .frame { stroke: #c47a70; }
.rail { flex: none; align-self: stretch; width: 9px; display: flex; align-items: center; padding-left: 1px; background: linear-gradient(#ccc, #ccc) 3px 0 / 1px 100% no-repeat, linear-gradient(#ccc, #ccc) 3px 5px / 5px 1px no-repeat; }
.minus .rail { background-position: 3px 5px, 3px 5px; }
.l1 .rail { background-size: 1px 100%, 0 0; }
.l0.end .rail { background-size: 1px 5px, 5px 1px; }
.box { width: 5px; height: 5px; background: #fff; fill: none; stroke: #8d99ab; }
.branch { flex: none; align-self: stretch; width: 12px; background: linear-gradient(#ccc, #ccc) 5px 0 / 1px 100% no-repeat, linear-gradient(#ccc, #ccc) 5px 5px / 5px 1px no-repeat; }
.l1.end .branch { background-size: 1px 5px, 5px 1px; }
.side li button { padding: 0 1px; line-height: 10px; }
.side .picked { background: #0a78d7; color: #fff; }
.hbar { margin-top: auto; height: 10px; display: flex; align-items: center; gap: 3px; padding: 0 3px; background: #f0f0f0; }
.hbar i { width: 142px; height: 8px; background: #cdcdcd; margin-right: auto; }
.pane { flex: 1; min-width: 0; background: #fff; border-left: 1px solid #b5b5b5; display: flex; flex-direction: column; }
.pane h1 { margin: 1px 1px 1px 0; height: 19px; border: 1px solid #999; background: #b3b3b3; color: #fff; font: 600 10px/17px "Open Sans", sans-serif; padding-left: 3px; }
.equity { width: 100%; flex: 1; min-height: 0; fill: none; }
.dash-grid path { stroke: #8c8c8c; stroke-dasharray: 2 1; }
.axis path { stroke: #444; }
.labels text { fill: #333; font: 7px "Open Sans", sans-serif; }
.report-foot { flex: none; height: 12px; background: #efefef; display: flex; justify-content: flex-end; align-items: flex-end; padding: 1px; }
.report-foot svg { width: 7px; fill: #aaa; }
</style>
